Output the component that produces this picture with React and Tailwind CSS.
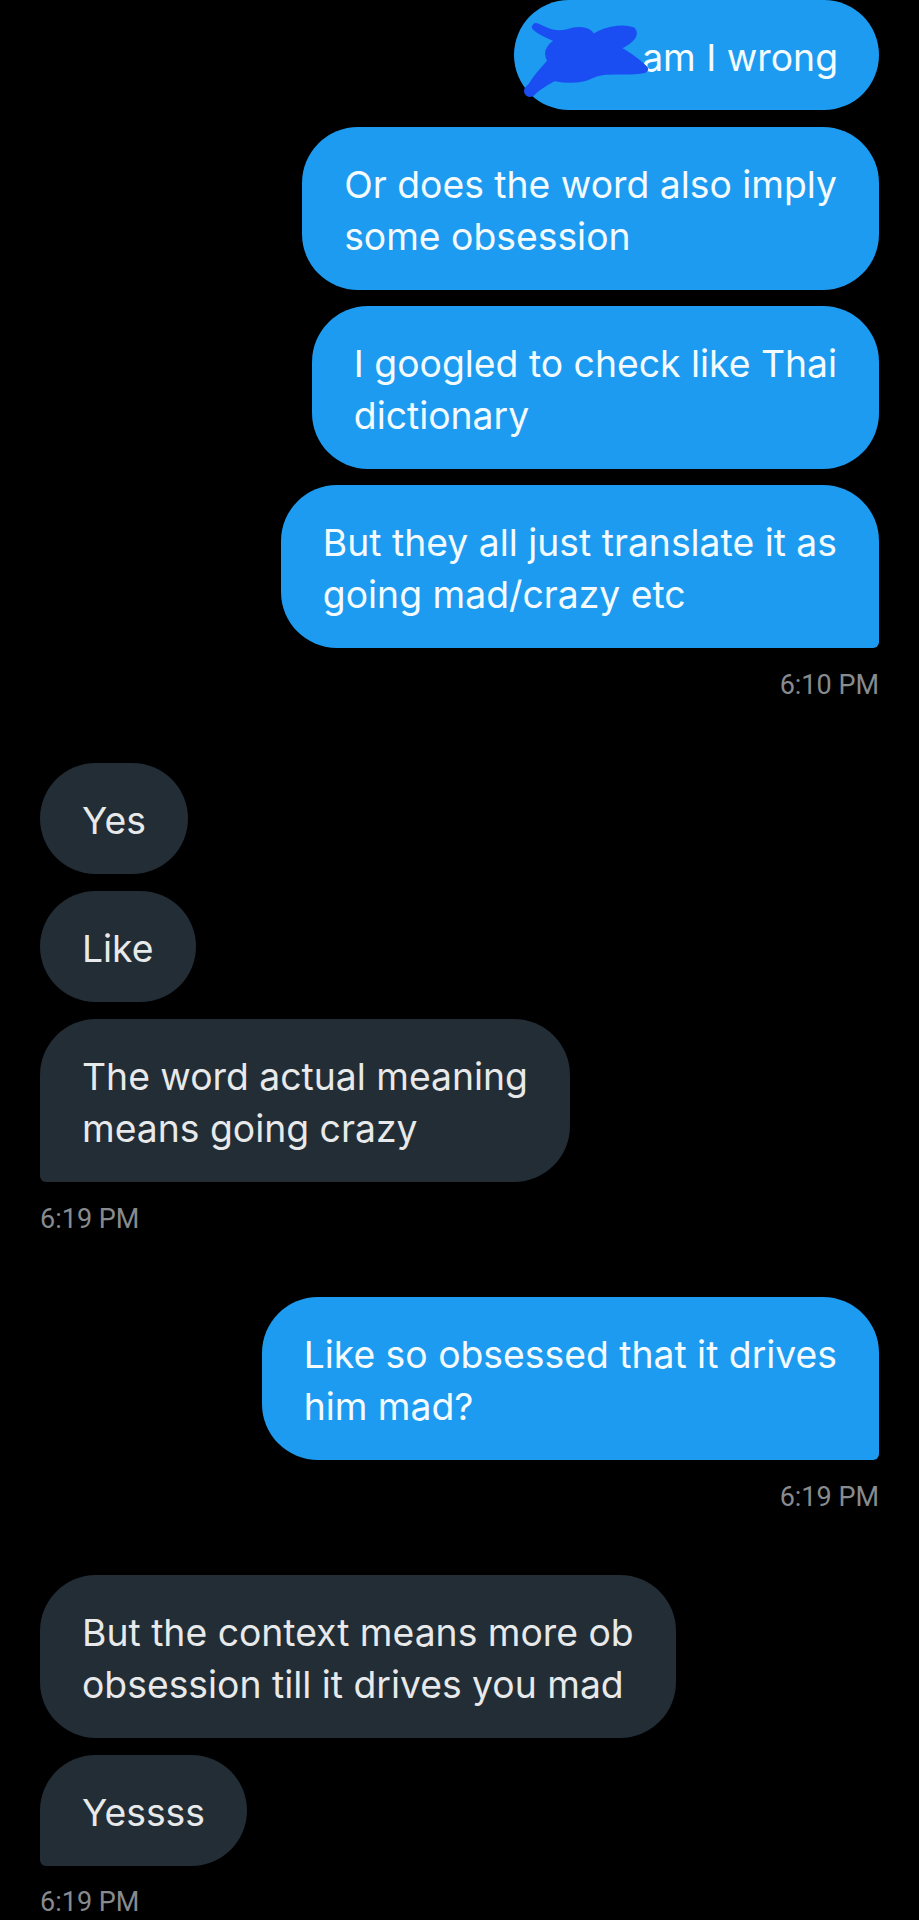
import React from 'react';

const textFont = { fontFamily: 'Inter, "Open Sans", sans-serif' };

// Bolla in uscita (blu) o in entrata (grigio scuro)
const Bubble = ({ mine, tail, children, className = '' }) => {
  const base = 'px-[42px] pt-[32px] pb-[27px] text-[37.3px] leading-[52px] whitespace-nowrap';
  const color = mine ? 'bg-[#1d9bf0] text-[#f4fbff]' : 'bg-[#232d35] text-[#e7e9ea]';
  let radius = 'rounded-[56px]';
  if (tail && mine) radius = 'rounded-[56px] rounded-br-[6px]';
  if (tail && !mine) radius = 'rounded-[56px] rounded-bl-[6px]';
  return (
    <div className={`${base} ${color} ${radius} ${className}`} style={textFont}>
      {children}
    </div>
  );
};

const Time = ({ right, children, className = '' }) => (
  <div
    className={`text-[27px] leading-[32px] text-[#878b8f] ${right ? 'self-end' : 'self-start'} ${className}`}
    style={{ fontFamily: 'Roboto, "Liberation Sans", sans-serif' }}
  >
    {children}
  </div>
);

const Scribble = () => (
  <span className="relative inline-block w-[112px] h-[40px] align-middle">
    <svg
      className="absolute left-[-6px] top-[-24px]"
      width="126"
      height="80"
      viewBox="0 0 126 80"
      fill="none"
    >
      <path
        d="M12 10 C 22 14, 30 20, 44 16 C 56 12, 70 14, 66 24 C 78 14, 98 10, 108 14 C 112 20, 96 30, 88 30 C 100 36, 112 44, 120 52 C 100 56, 80 50, 66 58 C 54 64, 40 62, 30 60 C 22 64, 14 70, 6 74 C 10 62, 20 54, 28 44 C 20 34, 30 26, 40 24 C 30 20, 18 16, 12 10 Z"
        fill="#1b4ef2"
        stroke="#1b4ef2"
        strokeWidth="8"
        strokeLinejoin="round"
        strokeLinecap="round"
      />
      <path
        d="M6 74 C 20 60, 36 48, 50 40 M 40 30 C 60 34, 80 36, 104 48"
        stroke="#1b4ef2"
        strokeWidth="12"
        strokeLinecap="round"
      />
    </svg>
  </span>
);

export default function App() {
  return (
    <div className="min-h-[1920px] w-full bg-black overflow-hidden">
      <div className="flex flex-col px-[40px]">
        {/* Mensajes enviados */}
        <div className="flex flex-col items-end gap-[16px]">
          <Bubble mine className="h-[110px] pl-[16px] pr-[41px] pt-[28px]">
            <Scribble />
            <span>am I wrong</span>
          </Bubble>
          <Bubble mine className="mt-[1px]">
            Or does the word also imply<br />some obsession
          </Bubble>
          <Bubble mine>
            I googled to check like Thai<br />dictionary
          </Bubble>
          <Bubble mine tail>
            But they all just translate it as<br />going mad/crazy etc
          </Bubble>
        </div>
        <Time right className="mt-[21px]">6:10 PM</Time>

        {/* Respuestas */}
        <div className="flex flex-col items-start gap-[17px] mt-[62px]">
          <Bubble>Yes</Bubble>
          <Bubble>Like</Bubble>
          <Bubble tail>
            The word actual meaning<br />means going crazy
          </Bubble>
        </div>
        <Time className="mt-[21px]">6:19 PM</Time>

        <div className="flex flex-col items-end mt-[62px]">
          <Bubble mine tail>
            Like so obsessed that it drives<br />him mad?
          </Bubble>
        </div>
        <Time right className="mt-[21px]">6:19 PM</Time>

        <div className="flex flex-col items-start gap-[17px] mt-[62px]">
          <Bubble>
            But the context means more ob<br />obsession till it drives you mad
          </Bubble>
          <Bubble tail>Yessss</Bubble>
        </div>
        <Time className="mt-[20px]">6:19 PM</Time>
      </div>
    </div>
  );
}
